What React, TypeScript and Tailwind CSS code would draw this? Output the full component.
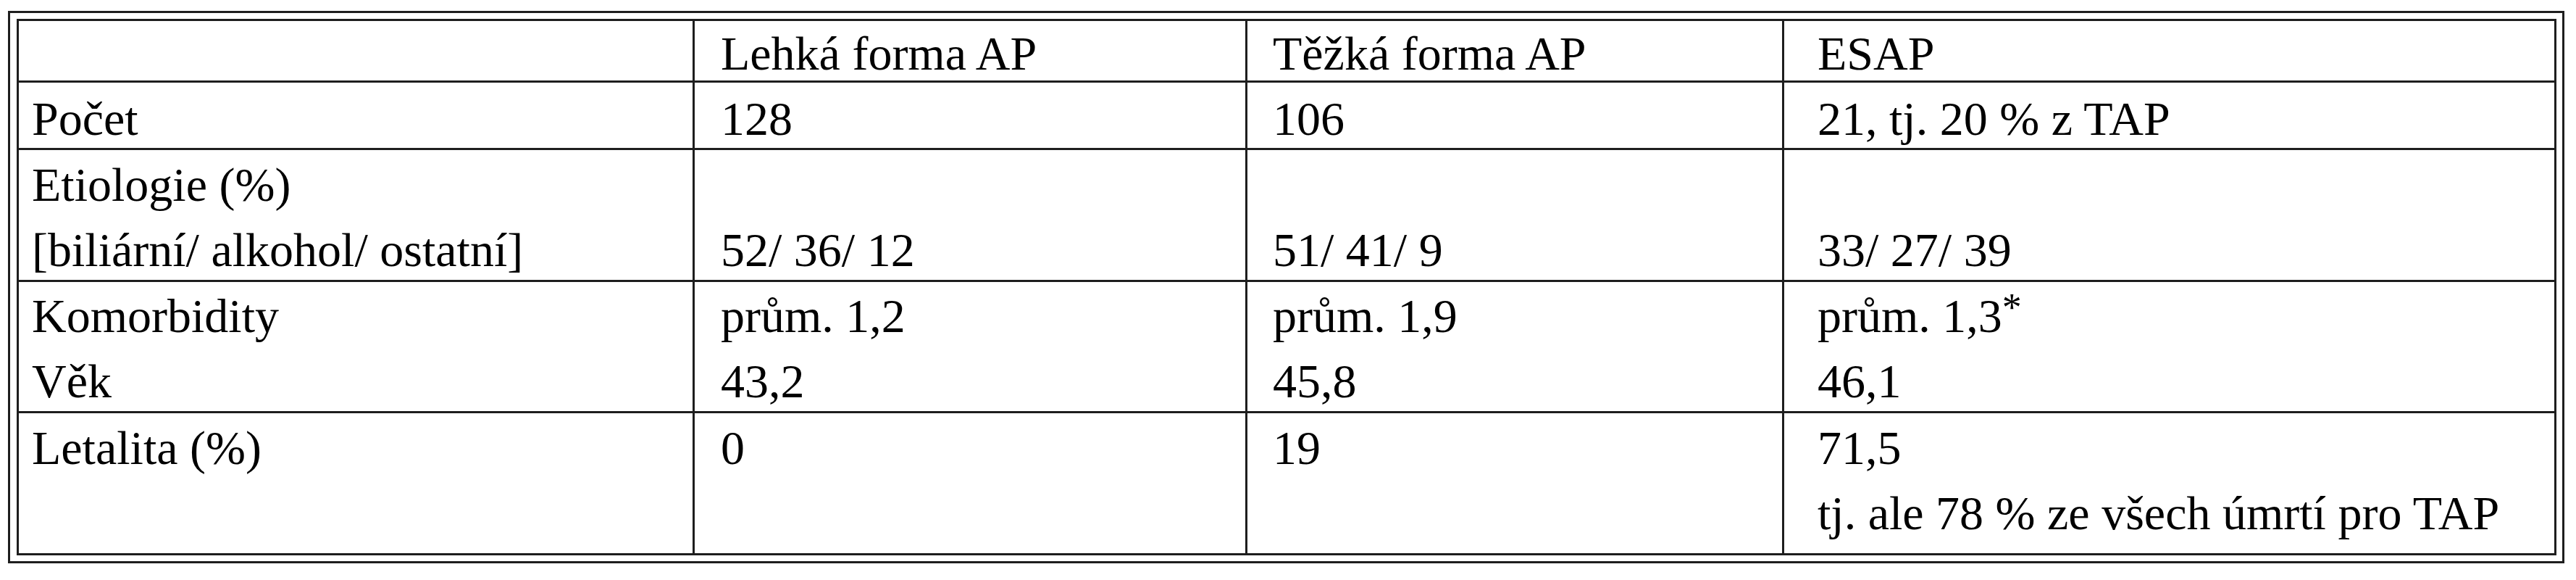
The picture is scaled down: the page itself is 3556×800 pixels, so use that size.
import React from "react";

type Cell = React.ReactNode[];

const rows: Cell[][] = [
  [[""], ["Lehká forma AP"], ["Těžká forma AP"], ["ESAP"]],
  [["Počet"], ["128"], ["106"], ["21, tj. 20 % z TAP"]],
  [
    ["Etiologie (%)", "[biliární/ alkohol/ ostatní]"],
    ["\u00a0", "52/ 36/ 12"],
    ["\u00a0", "51/ 41/ 9"],
    ["\u00a0", "33/ 27/ 39"],
  ],
  [
    ["Komorbidity", "Věk"],
    ["prům. 1,2", "43,2"],
    ["prům. 1,9", "45,8"],
    [
      <>
        prům. 1,3<span className="text-[54px] leading-none relative -top-[16px]">*</span>
      </>,
      "46,1",
    ],
  ],
  [["Letalita (%)"], ["0"], ["19"], ["71,5", "tj. ale 78 % ze všech úmrtí pro TAP"]],
];

const rowPad = ["pt-0", "pt-[5px]", "pt-[3px]", "pt-[2px]", "pt-[3px]"];
const colPad = ["pl-[18px]", "pl-[36px]", "pl-[35px]", "pl-[46px]"];

export default function App() {
  return (
    <div className="min-h-screen bg-white">
      <div className="ml-[11px] mt-[15px] w-[3529px] h-[762px] border-[3px] border-[#1e1e1e] pl-[9px] pr-[8px] pt-[8px] pb-[8px]">
        <div className="grid w-[3506px] border-[3px] border-[#1e1e1e] grid-cols-[930px_763px_741px_1066px] grid-rows-[82px_93px_182px_181px_196px] font-['Liberation_Serif','Times_New_Roman',serif] text-[66px] leading-[90px] text-black">
          {rows.map((row, r) =>
            row.map((lines, c) => (
              <div
                key={`${r}-${c}`}
                className={`border-[#1e1e1e] whitespace-nowrap ${r > 0 ? "border-t-[3px]" : ""} ${c > 0 ? "border-l-[3px]" : ""} ${rowPad[r]} ${colPad[c]}`}
              >
                {lines.map((line, i) => (
                  <div key={i}>{line}</div>
                ))}
              </div>
            ))
          )}
        </div>
      </div>
    </div>
  );
}
